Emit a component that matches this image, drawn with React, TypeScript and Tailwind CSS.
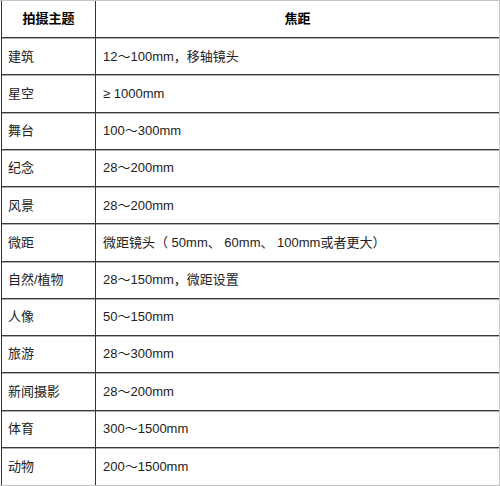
import React from "react";

const rows: [string, string][] = [
  ["建筑", "12～100mm，移轴镜头"],
  ["星空", "≥ 1000mm"],
  ["舞台", "100～300mm"],
  ["纪念", "28～200mm"],
  ["风景", "28～200mm"],
  ["微距", "微距镜头（ 50mm、 60mm、 100mm或者更大）"],
  ["自然/植物", "28～150mm，微距设置"],
  ["人像", "50～150mm"],
  ["旅游", "28～300mm"],
  ["新闻摄影", "28～200mm"],
  ["体育", "300～1500mm"],
  ["动物", "200～1500mm"],
];

export default function App() {
  return (
    <div
      className="w-[500px] h-[486px] bg-white border-t border-r border-b border-[#c4c4c4] text-[#222] text-[13px]"
      style={{ fontFamily: '"Liberation Sans", Arial, "Noto Sans CJK SC", sans-serif' }}
    >
      <div className="ml-[1px] h-[484px] border-l border-[#333] grid grid-rows-[repeat(13,1fr)]">
        <div className="grid grid-cols-[94px_1fr] border-b border-[#3a3a3a] shadow-[0_1px_0_#b0b0b0]">
          <div className="border-r border-[#333] flex items-center justify-center font-bold text-black">
            拍摄主题
          </div>
          <div className="flex items-center justify-center font-bold text-black">焦距</div>
        </div>
        {rows.map(([a, b], i) => (
          <div
            key={i}
            className={
              "grid grid-cols-[94px_1fr] " +
              (i < rows.length - 1 ? "border-b border-[#3a3a3a] shadow-[0_1px_0_#b0b0b0]" : "")
            }
          >
            <div className="border-r border-[#333] flex items-center pl-[6px]">{a}</div>
            <div className="flex items-center pl-[7px]">{b}</div>
          </div>
        ))}
      </div>
    </div>
  );
}
